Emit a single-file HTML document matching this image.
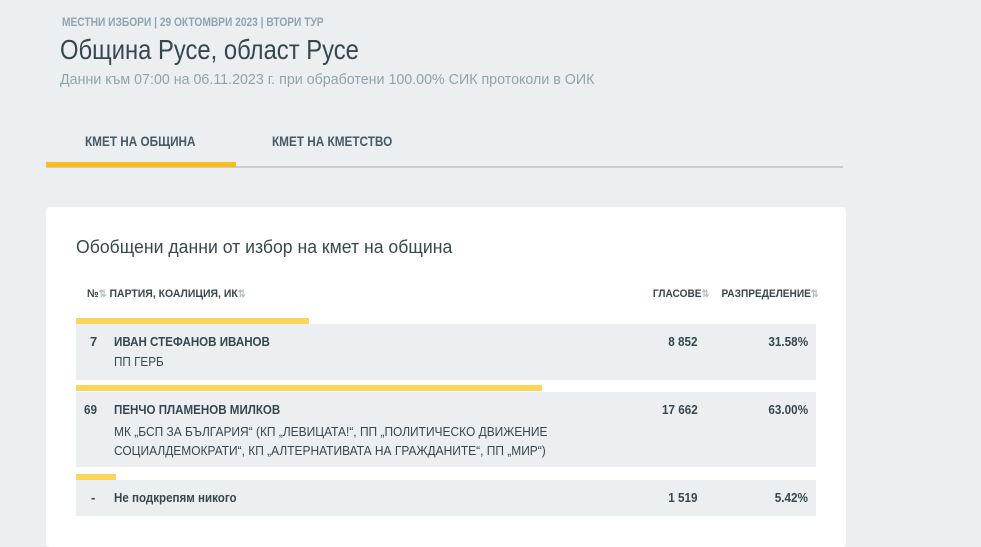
<!DOCTYPE html>
<html><head><meta charset="utf-8"><style>
body{margin:0;width:981px;height:539px;overflow:hidden;background:#eceff1;font-family:"Liberation Sans",sans-serif;color:#37474f;position:relative}
.a{position:absolute;white-space:nowrap;transform-origin:left top}
.r{position:absolute;white-space:nowrap;transform-origin:right top;text-align:right}
.b{font-weight:bold}
.row{position:absolute;left:76px;width:740px;background:#eceff1}
.bar{position:absolute;left:76px;height:6px;background:#fdd55a}
.ar{color:#b0bec5;font-size:10px}
</style></head><body>
<div class="a b" style="left:62px;top:15px;font-size:12px;color:#90a4ae;transform:scaleX(.85)">МЕСТНИ ИЗБОРИ | 29 ОКТОМВРИ 2023 | ВТОРИ ТУР</div>
<div class="a" style="left:60px;top:34px;font-size:28px;color:#37474f;transform:scaleX(.85)">Община Русе, област Русе</div>
<div class="a" style="left:60px;top:71px;font-size:15px;color:#90a4ae;transform:scaleX(.95)">Данни към 07:00 на 06.11.2023 г. при обработени 100.00% СИК протоколи в ОИК</div>
<div class="a b" style="left:85px;top:133px;font-size:14px;color:#455a64;transform:scaleX(.84)">КМЕТ НА ОБЩИНА</div>
<div class="a b" style="left:272px;top:133px;font-size:14px;color:#455a64;transform:scaleX(.84)">КМЕТ НА КМЕТСТВО</div>
<div class="a" style="left:46px;top:166px;width:797px;height:2px;background:#c9cdd0"></div>
<div class="a" style="left:46px;top:162px;width:190px;height:5px;background:#f9be16"></div>
<div class="a" style="left:46px;top:207px;width:800px;height:340px;background:#fff;border-radius:4px"></div>
<div class="a" style="left:76px;top:237px;font-size:18px;color:#37474f;transform:scaleX(.98)">Обобщени данни от избор на кмет на община</div>
<div class="a b" style="left:87px;top:288px;font-size:11px;transform:scaleX(.95)">№<span class="ar">⇅</span> ПАРТИЯ, КОАЛИЦИЯ, ИК<span class="ar">⇅</span></div>
<div class="r b" style="right:272px;top:288px;font-size:11px;transform:scaleX(.92)">ГЛАСОВЕ<span class="ar">⇅</span></div>
<div class="r b" style="right:162px;top:288px;font-size:11px;transform:scaleX(.92)">РАЗПРЕДЕЛЕНИЕ<span class="ar">⇅</span></div>
<div class="bar" style="top:318px;width:233px"></div>
<div class="row" style="top:324px;height:56px"></div>
<div class="bar" style="top:385px;width:466px"></div>
<div class="row" style="top:392px;height:75px"></div>
<div class="bar" style="top:474px;width:40px"></div>
<div class="row" style="top:480px;height:36px"></div>
<div class="a b" style="left:90px;top:334px;font-size:13px">7</div>
<div class="a b" style="left:114px;top:334px;font-size:13px;transform:scaleX(.89)">ИВАН СТЕФАНОВ ИВАНОВ</div>
<div class="a" style="left:114px;top:354px;font-size:13px;transform:scaleX(.9)">ПП ГЕРБ</div>
<div class="r b" style="right:283px;top:334px;font-size:13px;transform:scaleX(.9)">8 852</div>
<div class="r b" style="right:173px;top:334px;font-size:13px;transform:scaleX(.9)">31.58%</div>
<div class="a b" style="left:84px;top:402px;font-size:13px;transform:scaleX(.9)">69</div>
<div class="a b" style="left:114px;top:402px;font-size:13px;transform:scaleX(.89)">ПЕНЧО ПЛАМЕНОВ МИЛКОВ</div>
<div class="a" style="left:114px;top:422px;font-size:13px;line-height:19px;transform:scaleX(.92)">МК „БСП ЗА БЪЛГАРИЯ“ (КП „ЛЕВИЦАТА!“, ПП „ПОЛИТИЧЕСКО ДВИЖЕНИЕ<br>СОЦИАЛДЕМОКРАТИ“, КП „АЛТЕРНАТИВАТА НА ГРАЖДАНИТЕ“, ПП „МИР“)</div>
<div class="r b" style="right:283px;top:402px;font-size:13px;transform:scaleX(.9)">17 662</div>
<div class="r b" style="right:173px;top:402px;font-size:13px;transform:scaleX(.9)">63.00%</div>
<div class="a b" style="left:91px;top:490px;font-size:13px">-</div>
<div class="a b" style="left:114px;top:490px;font-size:13px;transform:scaleX(.89)">Не подкрепям никого</div>
<div class="r b" style="right:283px;top:490px;font-size:13px;transform:scaleX(.9)">1 519</div>
<div class="r b" style="right:173px;top:490px;font-size:13px;transform:scaleX(.9)">5.42%</div>
</body></html>
